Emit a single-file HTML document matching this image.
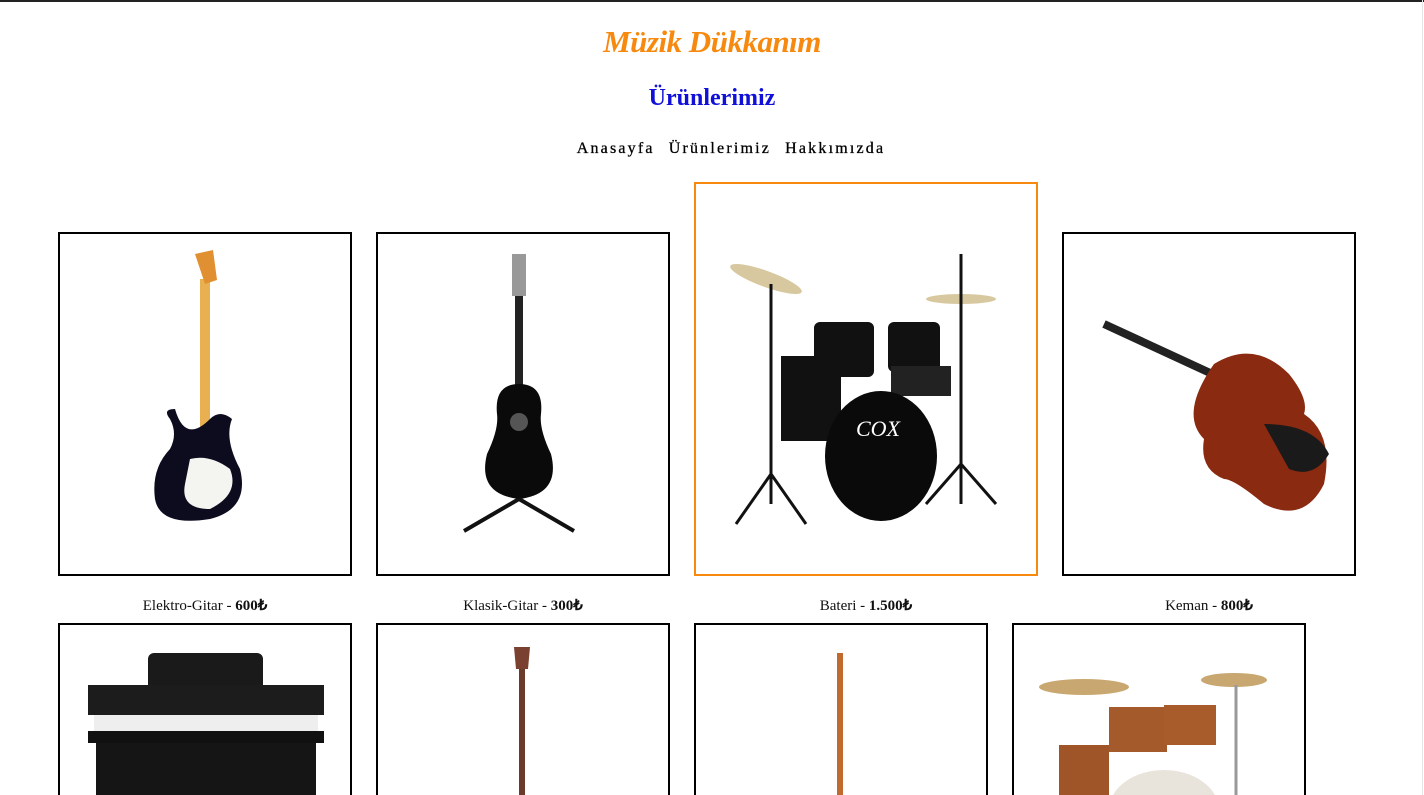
<!DOCTYPE html>
<html><head><meta charset="utf-8"><style>
html,body{margin:0;padding:0;background:#fff;width:1424px;height:795px;overflow:hidden;}
body{font-family:"Liberation Serif",serif;}
#wrap{position:relative;width:1424px;height:795px;overflow:hidden}
.tline{position:absolute;left:0;top:0;width:1424px;height:2px;background:#222}
.rline{position:absolute;right:1px;top:0;width:1px;height:795px;background:#e6e6e6}
h1{position:absolute;top:24px;left:0;width:1424px;text-align:center;margin:0;font:bold italic 31px "Liberation Serif",serif;color:#f7890f;letter-spacing:-0.5px}
h2{position:absolute;top:85px;left:0;width:1424px;text-align:center;margin:0;font:bold 24px "Liberation Serif",serif;color:#1010d8}
nav{position:absolute;top:140px;left:0;width:1424px;padding-left:38px;box-sizing:border-box;text-align:center;font:16px "Liberation Serif",serif;letter-spacing:2.2px;color:#000;-webkit-text-stroke:0.3px #000}
nav span{margin:0 7px}
.box{position:absolute;border:2px solid #000;box-sizing:border-box;width:294px;height:344px;overflow:hidden;background:#fff}
.box svg{position:absolute;left:0;top:0}
.cap{position:absolute;width:294px;text-align:center;font:15px "Liberation Serif",serif;top:596px;color:#111}
.cap b{font-weight:bold}
</style></head><body><div id="wrap">
<div class="tline"></div>
<div class="rline"></div>
<h1>Müzik Dükkanım</h1>
<h2>Ürünlerimiz</h2>
<nav><span>Anasayfa</span><span>Ürünlerimiz</span><span>Hakkımızda</span></nav>

<div class="box" style="left:58px;top:232px"><svg width="290" height="340">
<rect x="140" y="45" width="10" height="180" fill="#e8b050"/><path d="M135 20 l18 -4 l4 30 l-12 4z" fill="#e09030"/>
<path d="M110 185 q-8 -10 5 -10 q10 35 35 10 q10 -10 22 0 q-8 20 8 50 q10 40 -30 50 q-50 8 -55 -20 q-4 -30 15 -50 q8 -15 0 -30z" fill="#0c0c1e"/>
<path d="M130 225 q20 -5 40 10 q10 25 -20 40 q-30 0 -25 -25z" fill="#f4f4f0"/>
</svg></div>
<div class="cap" style="left:58px">Elektro-Gitar - <b>600₺</b></div>

<div class="box" style="left:376px;top:232px"><svg width="290" height="340">
<rect x="137" y="60" width="8" height="110" fill="#222"/><rect x="134" y="20" width="14" height="42" fill="#999"/>
<path d="M141 150 q-25 0 -22 30 q2 15 -10 40 q-10 40 32 45 q42 -5 32 -45 q-12 -25 -10 -40 q3 -30 -22 -30z" fill="#0a0a0a"/>
<circle cx="141" cy="188" r="9" fill="#555"/>
<path d="M141 265 l-55 32 M141 265 l55 32" stroke="#111" stroke-width="4"/>
</svg></div>
<div class="cap" style="left:376px">Klasik-Gitar - <b>300₺</b></div>

<div class="box" style="left:694px;top:182px;width:344px;height:394px;border-color:#f7890f"><svg width="340" height="390">
<ellipse cx="70" cy="95" rx="38" ry="8" fill="#d8c8a0" transform="rotate(20 70 95)"/>
<ellipse cx="265" cy="115" rx="35" ry="5" fill="#d8c8a0"/>
<line x1="75" y1="100" x2="75" y2="320" stroke="#111" stroke-width="3"/>
<line x1="265" y1="70" x2="265" y2="320" stroke="#111" stroke-width="3"/>
<rect x="85" y="172" width="60" height="85" fill="#111"/>
<rect x="118" y="138" width="60" height="55" rx="6" fill="#111"/>
<rect x="192" y="138" width="52" height="50" rx="6" fill="#111"/>
<rect x="195" y="182" width="60" height="30" fill="#222"/>
<ellipse cx="185" cy="272" rx="56" ry="65" fill="#0a0a0a"/>
<text x="160" y="252" font-family="Liberation Serif" font-style="italic" font-size="22" fill="#fff">COX</text>
<path d="M40 340 l35 -50 l35 50 M230 320 l35 -40 l35 40" stroke="#111" stroke-width="3" fill="none"/>
</svg></div>
<div class="cap" style="left:719px">Bateri - <b>1.500₺</b></div>

<div class="box" style="left:1062px;top:232px"><svg width="290" height="340">
<path d="M40 90 l130 60" stroke="#222" stroke-width="8"/>
<path d="M150 130 q40 -25 75 10 q20 25 15 40 q30 20 20 70 q-20 40 -60 20 q-30 -25 -40 -25 q-25 -10 -20 -40 q-25 -25 10 -75z" fill="#8a2a10"/>
<path d="M200 190 q50 0 65 30 q-15 25 -40 15z" fill="#1a1a1a"/>
</svg></div>
<div class="cap" style="left:1062px">Keman - <b>800₺</b></div>

<div class="box" style="left:58px;top:623px"><svg width="290" height="200">
<rect x="88" y="28" width="115" height="45" rx="6" fill="#1a1a1a"/>
<rect x="28" y="60" width="236" height="30" fill="#1c1c1c"/>
<rect x="34" y="90" width="224" height="16" fill="#eee"/>
<rect x="28" y="106" width="236" height="12" fill="#111"/>
<rect x="36" y="118" width="220" height="60" fill="#151515"/>
</svg></div>
<div class="box" style="left:376px;top:623px"><svg width="290" height="200">
<rect x="141" y="40" width="6" height="140" fill="#6a3a2a"/><path d="M136 22 l16 0 l-2 22 l-12 0z" fill="#7a4030"/>
</svg></div>
<div class="box" style="left:694px;top:623px"><svg width="290" height="200">
<rect x="141" y="28" width="6" height="150" fill="#c06a30"/>
</svg></div>
<div class="box" style="left:1012px;top:623px"><svg width="290" height="200">
<ellipse cx="70" cy="62" rx="45" ry="8" fill="#c8a870"/><ellipse cx="220" cy="55" rx="33" ry="7" fill="#c8a870"/>
<rect x="95" y="82" width="58" height="45" fill="#a45a2a"/><rect x="150" y="80" width="52" height="40" fill="#a85c2c"/>
<rect x="45" y="120" width="50" height="60" fill="#a05528"/>
<ellipse cx="150" cy="185" rx="55" ry="40" fill="#e8e4dc"/>
<line x1="222" y1="60" x2="222" y2="180" stroke="#999" stroke-width="3"/>
</svg></div>
</div></body></html>
